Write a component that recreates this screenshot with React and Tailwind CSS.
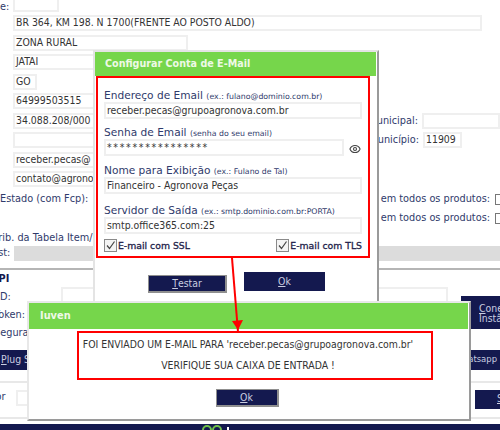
import React from "react";
import { Eye } from "lucide-react";

const wide = "font-['DejaVu_Sans',sans-serif]";
const labelCls = wide + " text-[9.75px] text-[#2f3a6b] whitespace-nowrap";

function Box({ className = "", children }) {
  return (
    <div className={"h-[16px] border-2 border-[#efefef] bg-white px-[1px] flex items-center text-[10.4px] text-[#333] whitespace-nowrap overflow-hidden " + className}>
      {children}
    </div>
  );
}

function Row({ className = "", children }) {
  return <div className={"h-[19.5px] flex items-start " + className}>{children}</div>;
}

function NavyButton({ first, rest, className = "" }) {
  return (
    <div className={"bg-[#14194f] text-[#c9cde0] text-[10.4px] flex items-center justify-center whitespace-nowrap " + className}>
      <span className="underline">{first}</span>
      {rest}
    </div>
  );
}

function Check({ label }) {
  return (
    <div className="flex items-center gap-[1px]">
      <div className="w-[13px] h-[13px] border border-[#8a8a8a] bg-[#f4f4f4] flex items-center justify-center">
        <svg width="11" height="11" viewBox="0 0 11 11">
          <path d="M2 5.5 L4.5 8.5 L9.5 1.5" fill="none" stroke="#444" strokeWidth="1.2" />
        </svg>
      </div>
      <span className={wide + " text-[9.3px] text-[#1e1e4a] [-webkit-text-stroke:0.3px_#1e1e4a]"}>{label}</span>
    </div>
  );
}

function Field({ label, hint, className = "", children }) {
  return (
    <div className={className}>
      <div className={wide + " h-[14px] leading-[14px] text-[10.6px] text-[#2f3a6b] whitespace-nowrap"}>
        {label} <span className="text-[7.8px]">{hint}</span>
      </div>
      {children}
    </div>
  );
}

function Input({ className = "", children }) {
  return (
    <div className={"h-[17px] border-2 border-[#efefef] bg-white pl-[1px] flex items-center text-[10.4px] text-[#333] whitespace-nowrap " + className}>
      {children}
    </div>
  );
}

export default function App() {
  return (
    <div className="relative w-[500px] h-[430px] overflow-hidden bg-white" style={{ fontFamily: '"DejaVu Sans Condensed", "DejaVu Sans", Verdana, sans-serif' }}>
      {/* background form */}
      <div className="mt-[-4.5px]">
        <Row className="pl-[13px] relative">
          <span className={labelCls + " absolute left-0 top-[4px]"}>e:</span>
          <Box className="w-[46px]" />
        </Row>
        <Row className="pl-[13px]"><Box className="w-[469px]">BR 364, KM 198. N 1700(FRENTE AO POSTO ALDO)</Box></Row>
        <Row className="pl-[13px]"><Box className="w-[175px]">ZONA RURAL</Box></Row>
        <Row className="pl-[13px]"><Box className="w-[175px]">JATAI</Box></Row>
        <Row className="pl-[13px]"><Box className="w-[24px]">GO</Box></Row>
        <Row className="pl-[13px]"><Box className="w-[120px]">64999503515</Box></Row>
        <Row className="pl-[13px] justify-between">
          <Box className="w-[120px]">34.088.208/000</Box>
          <div className="flex gap-[4px]">
            <span className={labelCls + " pt-[1px]"}>Inscrição Municipal:</span>
            <Box className="w-[78px]" />
          </div>
        </Row>
        <Row className="pl-[13px] justify-between">
          <Box className="w-[120px]" />
          <div className="flex gap-[4px] pr-[38px]">
            <span className={labelCls + " pt-[1px]"}>Cód. Município:</span>
            <Box className="w-[39px]">11909</Box>
          </div>
        </Row>
        <Row className="pl-[13px]"><Box className="w-[120px]">receber.pecas@</Box></Row>
        <Row className="pl-[13px]"><Box className="w-[120px]">contato@agronova</Box></Row>
        <Row className="justify-between">
          <div className="flex gap-[5px]">
            <span className={labelCls + " pt-[1px]"}>Estado (com Fcp):</span>
            <Box className="w-[30px]" />
          </div>
          <div className="flex items-start gap-[5px] mr-[-6px] pt-[1px]">
            <span className={labelCls}>FCP em todos os produtos:</span>
            <div className="w-[11px] h-[11px] border border-[#777] mt-[2px]" />
          </div>
        </Row>
        <Row className="justify-end">
          <div className="flex items-start gap-[5px] mr-[-6px] pt-[1px]">
            <span className={labelCls}>FCP em todos os produtos:</span>
            <div className="w-[11px] h-[11px] border border-[#777] mt-[2px]" />
          </div>
        </Row>
        <div className="h-[16px]">
          <span className={labelCls + " ml-[-12px] block pt-[1px]"}>Atrib. da Tabela Item/</span>
        </div>
        <div className="h-[16px] flex items-center">
          <span className={labelCls + " ml-[-8px] w-[22px]"}>Est:</span>
          <div className="flex-1 h-[15px] bg-[#dcdcdc]" />
        </div>
        <div className="mt-[6px] h-[2px] bg-[#b5b5b5]" />
        <div className="h-[80px] flex">
          <div className="w-[61px] shrink-0 pt-[2px] flex flex-col gap-[3px]">
            <span className={wide + " text-[9.75px] font-bold text-[#14194f] ml-[-9px] whitespace-nowrap h-[15px]"}>API</span>
            <span className={labelCls + " ml-[-3px] h-[15px]"}>ID:</span>
            <span className={labelCls + " ml-[-6px] h-[15px]"}>Token:</span>
            <span className={labelCls + " ml-[-6px] h-[15px]"}>Segurança:</span>
          </div>
          <Box className="w-[387px] shrink-0 mt-[17px]" />
          <div className="ml-[13px] shrink-0 mt-[26.5px] bg-[#14194f] text-[#c9cde0] text-[10.4px] leading-[10px] w-[39px] h-[33px] pl-[18px] flex flex-col justify-center whitespace-nowrap overflow-hidden">
            <span><span className="underline">C</span>onectar</span>
            <span>Instância</span>
          </div>
        </div>
        <div className="flex justify-between h-[20px]">
          <NavyButton first="P" rest="lug Shop" className="w-[90px] !justify-start pl-[1px]" />
          <NavyButton first="W" rest="hatsapp" className="w-[60px] !justify-end pr-[3px] !text-[9.4px]" />
        </div>
        <div className="mt-[11px] h-[2px] bg-[#e8e8e8]" />
        <div className="flex justify-between items-start pt-[7px] h-[36px] border-b-2 border-[#e8e8e8]">
          <div className="flex gap-[10px] items-center">
            <span className={labelCls + " ml-[-19px]"}>Valor</span>
            <Box className="w-[60px] h-[14px]" />
          </div>
          <NavyButton first="S" rest="alvar" className="w-[25px] h-[19px] !justify-start pl-[22px] overflow-hidden" />
        </div>
      </div>

      {/* footer bar */}
      <div className="absolute left-0 right-0 bottom-0 h-[6px] bg-[#14194f] overflow-hidden">
        <svg width="500" height="6" viewBox="0 0 500 6" className="block">
          <circle cx="207" cy="6" r="4" fill="none" stroke="#6fc04a" strokeWidth="2" />
          <circle cx="217" cy="6" r="4" fill="none" stroke="#6fc04a" strokeWidth="2" />
          <rect x="227" y="3" width="2" height="3" fill="#fff" />
        </svg>
      </div>

      {/* config dialog */}
      <div className="absolute left-[93px] top-[50px] w-[286px] h-[254px] bg-white border-t-2 border-l-2 border-[#e4e4e4] border-r-2 border-r-[#9a9a9a]">
        <div className={wide + " h-[24px] mr-[1px] bg-[#76d64b] flex items-center pl-[10px] text-[9.6px] font-bold text-[#eef9e6] whitespace-nowrap"}>
          Configurar Conta de E-Mail
        </div>
        <div className="ml-[1px] w-[274px] h-[182px] border-2 border-[#ff0000] pl-[6px] pr-[6px] pt-[10px]">
          <Field label="Endereço de Email" hint="(ex.: fulano@dominio.com.br)">
            <Input className="w-[258px]">receber.pecas@grupoagronova.com.br</Input>
          </Field>
          <Field label="Senha de Email" hint="(senha do seu email)" className="mt-[6px]">
            <div className="flex items-center">
              <Input className="w-[240px] !items-start leading-[12px] tracking-[1.7px]">****************</Input>
              <Eye size={12} strokeWidth={2.2} className="ml-[5px] mt-[2px] text-[#444]" />
            </div>
          </Field>
          <Field label="Nome para Exibição" hint="(ex.: Fulano de Tal)" className="mt-[7px]">
            <Input className="w-[258px]">Financeiro - Agronova Peças</Input>
          </Field>
          <Field label="Servidor de Saída" hint="(ex.: smtp.dominio.com.br:PORTA)" className="mt-[9px]">
            <Input className="w-[258px]">smtp.office365.com:25</Input>
          </Field>
          <div className="flex justify-between mt-[5px] w-[258px]">
            <Check label="E-mail com SSL" />
            <Check label="E-mail com TLS" />
          </div>
        </div>
        <div className="flex items-start pl-[53px] gap-[17px] mt-[14px]">
          <NavyButton first="T" rest="estar" className="w-[79px] h-[18px] mt-[3px] border-r-2 border-b-2 border-l border-t border-[#8f8f8f]" />
          <NavyButton first="O" rest="k" className="w-[81px] h-[19px]" />
        </div>
      </div>

      {/* notice dialog */}
      <div className="absolute left-[27px] top-[301px] w-[444px] h-[120px] bg-white border-t-2 border-l-2 border-[#e8e8e8] border-r-2 border-r-[#9a9a9a] border-b-2 border-b-[#9a9a9a]">
        <div className={wide + " h-[26px] mr-[1px] bg-[#76d64b] flex items-center pl-[11px] text-[9.8px] font-bold text-[#eef9e6]"}>Iuven</div>
        <div className="ml-[48px] mt-[2px] w-[356px] h-[49px] border-2 border-[#ff0000] flex flex-col items-center justify-between pt-[4px] pb-[4px] pr-[14px] text-[10.4px] text-[#333] whitespace-nowrap">
          <span>FOI ENVIADO UM E-MAIL PARA 'receber.pecas@grupoagronova.com.br'</span>
          <span>VERIFIQUE SUA CAIXA DE ENTRADA !</span>
        </div>
        <div className="flex justify-center pr-[4px] mt-[9px]">
          <NavyButton first="O" rest="k" className="w-[63px] h-[18px] border-r-2 border-b-2 border-t border-l border-[#8f8f8f]" />
        </div>
      </div>

      {/* arrow */}
      <svg className="absolute left-[225px] top-[256px]" width="22" height="78" viewBox="0 0 22 78">
        <path d="M7 2 L13 76" stroke="#ff0000" strokeWidth="2" fill="none" />
        <path d="M7 65 L18 64 L13 74 Z" fill="#ff0000" />
      </svg>
    </div>
  );
}
